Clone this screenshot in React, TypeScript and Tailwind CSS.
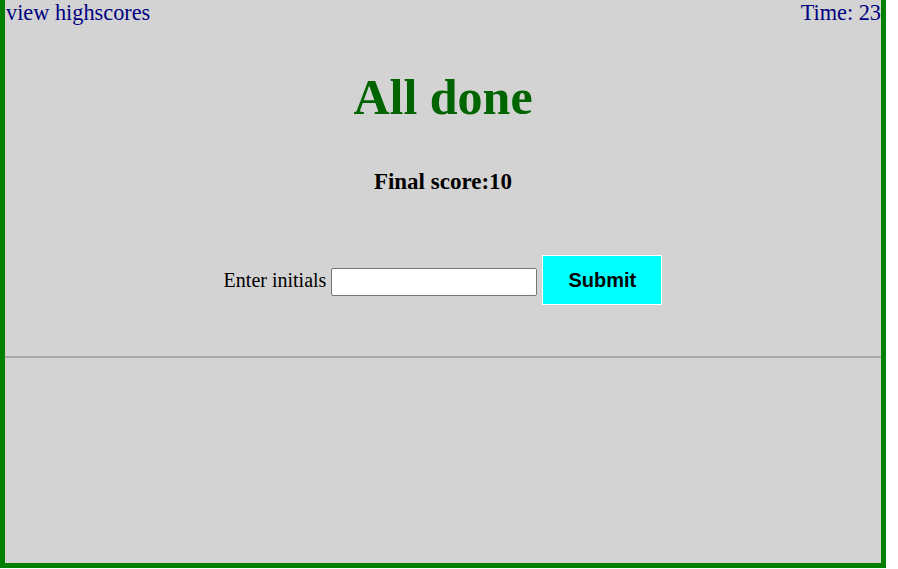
export default function App() {
  return (
    <div className="w-[898px] h-[569px] bg-white">
      <div className="w-[886px] h-[568px] bg-[#d3d3d3] border-x-[5px] border-b-[5px] border-[#008000] flex flex-col font-['Liberation_Serif',serif]">
        {/* header */}
        <div className="flex justify-between text-[22.3px] leading-[25px] text-[#000080]">
          <span className="ml-[1px]">view highscores</span>
          <span>Time: 23</span>
        </div>

        <h1 className="mt-[43px] text-center text-[50px] leading-[58px] font-bold text-[#006400]">
          All done
        </h1>

        <h3 className="mt-[42px] text-center text-[23px] leading-[27px] font-bold text-black">
          Final score:10
        </h3>

        <div className="mt-[60px] flex items-center justify-center text-[20px] leading-[25px] text-black">
          <label htmlFor="initials">Enter initials</label>
          <input
            id="initials"
            type="text"
            className="ml-[5px] mt-[4px] w-[206px] h-[28px] bg-white border border-[#767676] rounded-[2px] px-1 text-[13px]"
          />
          <button className="ml-[5px] w-[120px] h-[50px] bg-[#00ffff] border border-white font-['Liberation_Sans',Arial,sans-serif] font-bold text-[20px] text-black">
            Submit
          </button>
        </div>

        <div className="mt-[51px] h-[2px] bg-[#a9a9a9]" />
      </div>
    </div>
  );
}
